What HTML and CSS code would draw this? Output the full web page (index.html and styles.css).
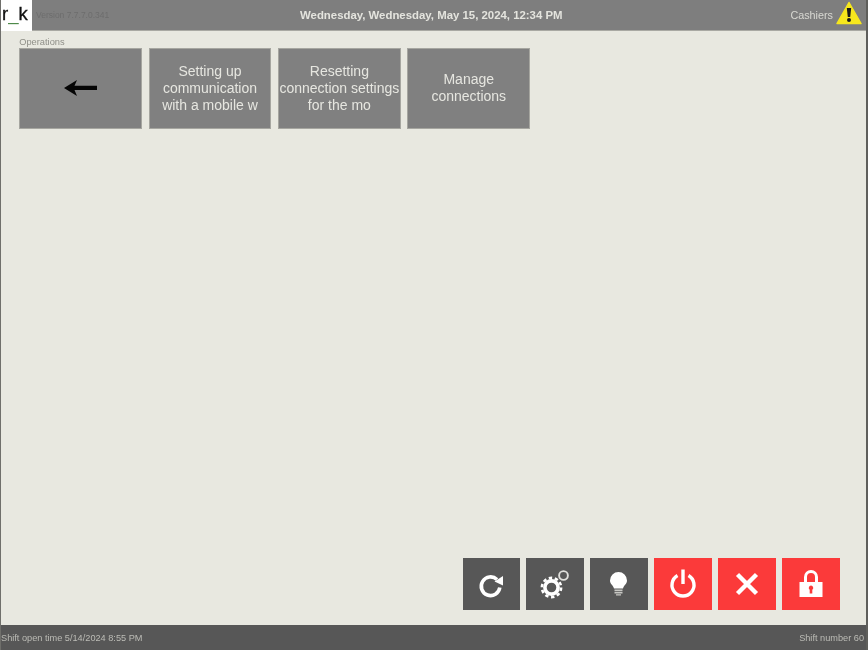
FILE: index.html
```html
<!DOCTYPE html>
<html lang="en">
<head>
<meta charset="utf-8">
<title>Operations</title>
<link rel="stylesheet" href="styles.css">
</head>
<body>
<div class="app">
  <header class="top">
    <div class="logo">r<span class="under">_</span>k</div>
    <div class="version">Version 7.7.7.0.341</div>
    <div class="date">Wednesday, Wednesday, May 15, 2024, 12:34 PM</div>
    <div class="user">
      <span class="cashiers">Cashiers</span>
      <svg class="warn" viewBox="0 0 26 24" width="26" height="24">
        <path d="M13 1.5 L25 22.5 H1 Z" fill="#f6e71d" stroke="#f6e71d" stroke-width="1.5" stroke-linejoin="round"/>
        <path d="M10.8 7 H15.2 L14.2 16 H11.8 Z" fill="#1a1a1a"/>
        <circle cx="13" cy="19" r="2" fill="#1a1a1a"/>
      </svg>
    </div>
  </header>
  <main class="main">
    <div class="section">
      <div class="label">Operations</div>
      <div class="tiles">
        <button class="tile">
          <svg viewBox="1 0 34 18" width="34" height="18"><path d="M1 9 L14 1 L11.5 6.8 H34 V11 H11.5 L14 17 Z" fill="#050505"/></svg>
        </button>
        <button class="tile">Setting up communication with a mobile w</button>
        <button class="tile">Resetting connection settings for the mo</button>
        <button class="tile tile-narrow">Manage connections</button>
      </div>
    </div>
    <div class="actions">
      <button class="act dark">
        <svg viewBox="0 0 30 30" width="30" height="30"><path d="M21 10.5 A9.3 9.3 0 1 0 23.8 18.5" fill="none" stroke="#fff" stroke-width="3.6"/><path d="M18.5 12.5 L27 7 V16.5 Z" fill="#fff"/></svg>
      </button>
      <button class="act dark">
        <svg viewBox="0 0 30 30" width="30" height="30">
          <circle cx="11.5" cy="18.5" r="6.6" fill="none" stroke="#fff" stroke-width="3.6"/>
          <circle cx="11.5" cy="18.5" r="9.6" fill="none" stroke="#fff" stroke-width="2.6" stroke-dasharray="3.4 2.63"/>
          <circle cx="23.5" cy="6.5" r="4.4" fill="none" stroke="#e0e0dc" stroke-width="1.9"/>
        </svg>
      </button>
      <button class="act dark">
        <svg viewBox="0 0 30 30" width="30" height="30">
          <path d="M14.5 3 A8.5 8.5 0 0 1 23 11.5 C23 15 20 16 19 19.5 H10 C9 16 6 15 6 11.5 A8.5 8.5 0 0 1 14.5 3 Z" fill="#fff"/>
          <path d="M10.5 20.5 H18.5 V22.2 H10.5 Z M10.5 23 H18.5 V24.6 H10.5 Z M12 25.2 H17 V26.4 H12 Z" fill="#c8c8c4"/>
        </svg>
      </button>
      <button class="act red">
        <svg viewBox="0 0 30 30" width="30" height="30"><path d="M9.5 6.5 A11 11 0 1 0 20.5 6.5" fill="none" stroke="#fff" stroke-width="3.4"/><path d="M15 0.5 V15" stroke="#fff" stroke-width="3.4"/></svg>
      </button>
      <button class="act red">
        <svg viewBox="0 0 30 30" width="30" height="30"><path d="M5.5 5.5 L24.5 24.5 M24.5 5.5 L5.5 24.5" stroke="#fff" stroke-width="4.4"/></svg>
      </button>
      <button class="act red">
        <svg viewBox="0 0 30 30" width="30" height="30"><path d="M9.5 14 V8 A5.5 5.5 0 0 1 20.5 8 V14" fill="none" stroke="#fff" stroke-width="3"/><path fill-rule="evenodd" d="M3.5 13 H26.5 V28 H3.5 Z M15 16.5 A2.4 2.4 0 0 0 13.7 20.8 V24.5 H16.3 V20.8 A2.4 2.4 0 0 0 15 16.5 Z" fill="#fff"/></svg>
      </button>
    </div>
  </main>
  <footer class="bottom">
    <span>Shift open time 5/14/2024 8:55 PM</span>
    <span>Shift number 60</span>
  </footer>
</div>
</body>
</html>
```

FILE: styles.css
```css
* {
  box-sizing: border-box;
}

html,
body {
  margin: 0;
  height: 100%;
  overflow: hidden;
  background: #e8e8e0;
}

body {
  font-family: "Liberation Sans", Arial, sans-serif;
}

.app {
  width: 868px;
  height: 650px;
  display: flex;
  flex-direction: column;
  border-left: 1px solid #6f6f6b;
  border-right: 2px solid #5f5f5c;
  background: #e8e8e0;
  filter: blur(0.7px);
}

.top {
  height: 31px;
  flex: none;
  display: flex;
  align-items: center;
  background: #7e7e7e;
  border-bottom: 1px solid #a9a9a3;
}

.logo {
  width: 31px;
  height: 31px;
  margin-top: 1px;
  padding-left: 1px;
  flex: none;
  background: #fff;
  color: #111;
  font-size: 18.5px;
  line-height: 28px;
  white-space: nowrap;
  -webkit-text-stroke: 0.35px #111;
}

.under {
  color: #4e8a4a;
  -webkit-text-stroke: 0;
}

.version {
  margin-left: 4px;
  width: 150px;
  font-size: 8.5px;
  color: #6d6d6d;
}

.date {
  margin-left: 114px;
  font-size: 11.4px;
  font-weight: 700;
  color: #e4e4de;
  white-space: nowrap;
}

.user {
  margin-left: auto;
  display: flex;
  align-items: center;
  gap: 3px;
  padding-right: 4px;
}

.cashiers {
  font-size: 10.8px;
  color: #d8d8d2;
}

.warn {
  display: block;
  margin-top: -4px;
}

.main {
  flex: 1;
  min-height: 0;
  display: flex;
  flex-direction: column;
  justify-content: space-between;
  padding: 6px 26.5px 15px 18.2px;
}

.label {
  font-size: 9.3px;
  line-height: 10px;
  height: 11px;
  color: #8f8f88;
}

.tiles {
  display: flex;
  gap: 6.6px;
}

.tile {
  width: 122.8px;
  height: 80.5px;
  padding: 0;
  border: 1px solid #a6a6a0;
  border-radius: 0;
  background: #808080;
  color: #e6e6e0;
  font-family: inherit;
  font-size: 14px;
  line-height: 17px;
  display: flex;
  align-items: center;
  justify-content: center;
  text-align: center;
}

.tile-narrow {
  padding: 0 20px;
}

.actions {
  align-self: flex-end;
  display: flex;
  gap: 6.4px;
}

.act {
  width: 57.5px;
  height: 52px;
  padding: 0;
  border: 0;
  border-radius: 0;
  display: flex;
  align-items: center;
  justify-content: center;
}

.dark {
  background: #575757;
}

.red {
  background: #fb3a3a;
}

.bottom {
  height: 25px;
  flex: none;
  display: flex;
  align-items: center;
  justify-content: space-between;
  padding: 0 2px 0 0;
  background: #575757;
  color: #bcbcb6;
  font-size: 9.2px;
}
```
